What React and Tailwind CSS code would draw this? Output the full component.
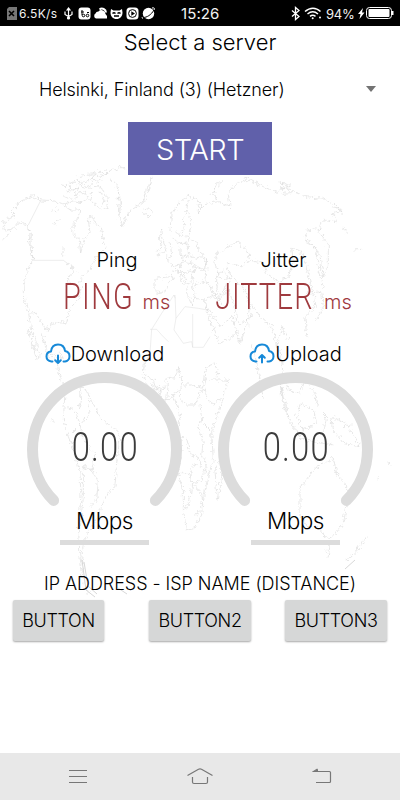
/* ── World map backdrop ──────────────────────────────────────────────── */
const WorldMap = () => (
  <svg className="absolute inset-0 pointer-events-none" width="400" height="800" fill="none" stroke="#d8d8d8" strokeWidth="1.8">
    <defs>
      <filter id="coast" x="-5%" y="-5%" width="110%" height="110%">
        <feTurbulence type="fractalNoise" baseFrequency="0.09" numOctaves="3" seed="4" />
        <feDisplacementMap in="SourceGraphic" scale="20" xChannelSelector="R" yChannelSelector="G" />
      </filter>
    </defs>
    {/* North America and Greenland */}
    <g transform="translate(0 160) scale(.3333)" filter="url(#coast)">
      <path d="M5 242 22 225 40 205 15 213 8 190 25 178 45 168 32 155 60 125 95 108 123 120 160 122 190 132 220 125 245 130" />
      <path d="M40 205 60 185 80 195 90 215 88 250 95 280 100 300M84 200 94 225 93 260 98 290 94 310M100 300 85 330 72 370 74 420 85 455 95 510 110 550 120 590" />
      <path d="M85 460 105 458 125 485 140 515 150 492 185 485 200 490 208 450 235 415 245 380" />
      <path d="M190 132 215 150 240 150 235 175 220 190 218 220 238 240 242 280 250 250 255 235 270 215 265 180 275 165" />
      <path d="M275 165 285 190 300 200 310 235 318 265 295 285 280 300 270 330 245 350 235 380" />
      <path d="M200 310 215 315 225 335 205 350 208 375M210 325 225 320M150 155 175 145 165 160M160 190 182 178M190 255 188 290" />
      <path d="M205 70 230 60 250 70 290 45 310 50 330 30 365 22 380 28M200 95 240 85 220 105 255 95 265 115 240 130M265 85 300 80 320 105 325 145 300 150 285 130 270 120 275 95M180 75 215 78 205 90M230 50 270 45 300 35M235 75 260 82 280 65 305 60M190 110 215 118 235 110M275 60 290 35 325 40M210 80 225 90 245 75 230 70M300 95 312 120 305 140" />
      <path d="M330 60 350 70 358 110 355 160 365 200 380 170 395 150 430 125 445 90 452 60 458 48M356 95 362 130 358 165M430 150 445 145 460 155 445 170 430 160M430 120 440 85 450 70" />
    </g>
    <g transform="translate(0 160) scale(.3333)" strokeWidth="1.5">
      <path d="M123 120 85 195M102 301H190L205 312" />
    </g>
    {/* Central and South America */}
    <g transform="translate(0 330) scale(.3333)" filter="url(#coast)">
      <path d="M85 0 95 40 112 90M125 10 145 75 170 95 180 140 195 185 205 175 240 170 260 180 275 215 305 270 345 295 360 320 350 400 345 470 320 495 305 530 290 570 265 605 250 640 245 690" />
      <path d="M195 185 190 270 205 320 225 370 240 430 243 500 235 590 240 680 250 750 265 790" />
      <path d="M205 230 230 250 240 285 215 310M240 170 245 210 235 240M265 205 270 250 240 285 250 330 285 370 275 420 250 410M275 420 295 450 290 510 270 530M250 410 250 500 240 600" />
      <path d="M150 70 190 85 175 60M155 265 160 275" />
    </g>
    {/* Europe and the Middle East */}
    <g transform="translate(120 170) scale(.3333)" filter="url(#coast)">
      <path d="M150 180 155 135 180 95 205 78 230 88 250 110 230 105M170 185 180 200 192 180 190 150 200 120 205 90M190 195 205 200 215 160 205 120M235 120 240 130 228 120M105 245 125 235 118 205 125 180 130 210 138 245 110 255" />
      <path d="M155 205 175 215 200 225 205 205 230 215 235 245 255 260 260 285 245 300 230 290 215 310 225 335 215 345 225 370 215 405 205 380 200 350 185 330 180 305 160 300 155 320 105 325 105 365 130 370 160 320" />
      <path d="M150 215 155 255 140 260 155 290 185 285 185 265 210 255 230 265 245 260M180 230 180 260 205 250 205 225M175 285 195 275 220 280 225 305 205 300 195 315 180 300M190 315 200 340 215 335M225 345 250 335 275 350 280 375 255 390 225 385" />
      <path d="M255 390 265 440 285 490 300 520 340 500 355 480M280 375 300 385 325 360 345 410 350 455 375 460 395 430M290 315 310 300 330 330 315 350 300 390 290 350Z" />
    </g>
    <g transform="translate(120 170) scale(.3333)" strokeWidth="1.3">
      <path d="M95 478 125 430 162 375 166 385M165 375 168 445 195 410 235 415 262 420M218 432V532H250L270 500M168 445 162 480 190 520 215 515 218 532M90 478H110L125 495 145 515M95 478 90 550 75 580" />
    </g>
    {/* Africa */}
    <g transform="translate(120 360) scale(.3333)" filter="url(#coast)">
      <path d="M75 -20 70 45 85 80 105 118 140 120 160 105 175 150 180 180 170 210 185 250 180 290 175 340 190 400 190 450 200 510 225 500 245 465 250 420 265 345 280 300 275 215 290 170 305 130 325 60 270 60" />
      <path d="M75 45 100 60 110 90 135 85 140 50 165 55 175 20 185 65 180 120 200 135 225 135 240 100 250 85 215 75 190 75M250 85 260 20 285 10 295 50M255 85 262 120 280 130 305 115M240 130 245 180 235 210 250 235 245 290 260 310 255 340" />
      <path d="M180 230 200 235 210 280 235 295 245 320 225 310 210 340 180 340M210 340 215 370 245 360 250 335M215 370 210 420 195 450M215 370 245 400 250 435M240 425 243 445M225 460 235 455 230 470ZM250 190 270 210M285 330 290 400 295 420 305 350 300 300Z" />
      <path d="M95 70 110 110M115 75 125 115M145 70 140 120M160 100 185 90" />
    </g>
    {/* Asia */}
    <g transform="translate(200 160) scale(.3333)" filter="url(#coast)">
      <path d="M0 150 20 130 60 125 90 140 85 100 110 70 150 60 190 80 235 100 250 80 280 95 320 110 370 115 400 130 425 155 400 160 410 185 380 180 365 185 355 215 385 250 385 320 370 350 360 290 345 260 315 235 320 210 365 205" />
      <path d="M35 105 50 70 65 65M65 65 40 90 50 120M130 55 150 48M240 70 270 72M235 65 265 80 245 85M245 100 275 98M460 270 485 268M430 200 440 225M320 245 345 260 355 320 370 380 355 400M395 140 420 145 430 165" />
      <path d="M45 310 50 280 110 245 140 270 150 300 190 310 200 340 235 365 265 350 280 300 275 265 310 280 320 330 335 380 345 440 315 470 320 530" />
      <path d="M45 310 60 360 95 355 130 380 150 430 140 500 120 550 95 470 60 500 20 440M95 355 80 310 120 320 150 300M150 430 190 480 215 500 230 560 245 500 265 540" />
      <path d="M320 400 365 395 370 440 350 480M0 290 20 300 15 360 40 400 70 440" />
    </g>
    {/* Indonesia and Australia */}
    <g transform="translate(200 330) scale(.3333)" filter="url(#coast)">
      <path d="M155 40 170 100 190 205 180 180M240 160 270 280 300 320 255 240ZM300 220 340 240 350 280 310 300 290 260ZM300 325 340 335 400 345M360 240 380 260 370 310M395 260 440 280 480 350 430 340 400 300ZM240 60 250 130 265 180 300 190 320 140M325 170 345 190 355 230M430 290 455 285" />
      <path d="M300 475 340 420 370 400 400 385 410 430 440 470 440 530 430 580 400 620 385 630 350 590 320 590 300 560ZM370 635 390 645 385 680 375 660M500 620 480 650 450 685 440 690M560 395 575 405M535 445 540 440" />
    </g>
    <path d="M82 560 84 575 86 590 95 597M84 562 88 586 97 594M118 588 127 594M345 569 355 560" strokeWidth="1" />
  </svg>
);

/* ── Status bar ──────────────────────────────────────────────────────── */
const StatusBar = () => (
  <div className="relative flex h-[26px] items-center bg-black font-normal text-[#f2f2f2]">
    <svg width="160" height="26" className="absolute left-0 top-0" fill="none">
      <path d="M9 7h8v13H7V9z" fill="#777" />
      <path d="m9 11 5 5m0-5-5 5" stroke="#000" strokeWidth="1.6" />
      <g stroke="#fff" strokeWidth="1.2">
        <path d="M68.500 9v9M65 11.500v3l3.500 2 3.500-2v-3" />
        <circle cx="68.500" cy="18" r="1" fill="#fff" />
        <path d="m67 10 1.500-2 1.500 2z" fill="#fff" />
      </g>
      <rect x="78.500" y="7.500" width="12" height="12" rx="3" fill="#fff" />
      <path d="M82 10v5m-1-3h3" stroke="#000" />
      <circle cx="83.500" cy="15.500" r="1.300" stroke="#000" />
      <circle cx="87.500" cy="15.500" r="1.300" stroke="#000" />
      <path d="M87 12.500h2" stroke="#000" />
      <path d="M96 18.500a2.800 2.800 0 0 1-.5-5 3 3 0 0 1 3-2 4 4 0 0 1 7 2.500l1.500 2v2.500z" fill="#fff" />
      <path d="M99.500 9.500a4 4 0 0 1 6.500 3" stroke="#fff" strokeWidth="2" />
      <path d="M111 9 113.500 10.500h6L122 9l.5 3.500c0 4-2.500 6.500-6 6.500s-6-2.500-6-6.500z" fill="#fff" />
      <path d="M112.500 13.500c1-1 2-1 3 0m2 0c1-1 2-1 3 0M114 16h5" stroke="#000" strokeWidth="1.300" />
      <rect x="126.500" y="7.500" width="12" height="12" rx="3.500" fill="#fff" />
      <circle cx="132.500" cy="13.500" r="3.900" stroke="#000" />
      <path d="m131.300 11.300 3.700 2.200-3.700 2.200z" fill="#000" />
      <circle cx="148.500" cy="13.500" r="5.700" fill="#fff" />
      <path d="M143 17.500c4 0 8-2.500 11-7.500" stroke="#000" />
      <path d="M143 18.500c-1-.3-1-.8-.5-1.500M152 8c2-.5 3 0 2 2" stroke="#fff" />
    </svg>
    <span className="absolute left-[19px] top-[5px] text-[12px] leading-[18px] tracking-[0.35px]">6.5K/s</span>
    <span className="absolute left-[181px] top-[5px] text-[15px] leading-[18px] tracking-[0.1px]">15:26</span>
    <svg width="110" height="26" className="absolute left-[290px] top-0" fill="none" stroke="#fff">
      <path d="m2 10.500 7 6-3.500 3V7.500l3.500 3-7 6" strokeWidth="1.300" />
      <path d="M15 11.500c5-4.500 11-4.500 15.500 0M17.500 14c3.500-3 7-3 10.500 0M20 16.300c2-1.500 3.500-1.500 5.500 0" strokeWidth="1.500" />
      <circle cx="22.700" cy="18.200" r="1" fill="#fff" stroke="none" />
      <circle cx="30" cy="17.500" r="1" fill="#fff" stroke="none" />
      <path d="m73 8-5 6h2.500l-1 5 5-6.500H72z" fill="#fff" stroke="none" />
      <rect x="76.500" y="7.500" width="25" height="11" rx="3" />
      <rect x="78.500" y="9" width="21" height="8" rx="1" fill="#fff" stroke="none" />
      <path d="M102.500 11v4" strokeWidth="2" />
    </svg>
    <span className="absolute left-[326px] top-[5px] text-[13px] leading-[18px] tracking-[-0.2px]">94%</span>
  </div>
);

/* ── Latency reading ─────────────────────────────────────────────────── */
const Latency = ({ label, value, valueClass, className }) => (
  <div className={`flex flex-col items-center ${className}`}>
    <p className="text-[20px] leading-6">{label}</p>
    <div className="mt-[7px] flex h-9 items-baseline gap-[10px] whitespace-nowrap text-[#9f3a3e]">
      <span className={`flex justify-center font-['Roboto'] text-[36px] leading-9 ${valueClass}`}>
        <span className="scale-x-[0.8]">{value}</span>
      </span>
      <span className="text-[20px]">ms</span>
    </div>
  </div>
);

const CloudIcon = ({ up }) => (
  <svg width="26" height="22" viewBox="0 0 26 22" fill="none" stroke="#1689d8" strokeWidth="2" strokeLinecap="round" strokeLinejoin="round">
    <path d="M7.500 18.500h-1C3.500 18 1.500 16 1.500 13.500c0-3 2-4.800 4.500-5C6.500 4 9 1.500 13 1.500s6.500 2.500 7 6.500c2.800.5 4.500 2.500 4.500 5.200 0 2.800-2 5-4.500 5.300h-1.500" />
    {up ? <path d="M13 19.500v-7m-2.800 2.300L13 12l2.800 2.800" /> : <path d="M13 12.500v7m-2.800-2.300L13 20l2.800-2.800" />}
  </svg>
);

/* ── Speed gauge ─────────────────────────────────────────────────────── */
const Gauge = ({ label, up }) => (
  <div className="flex w-[155px] flex-col items-center">
    <div className="flex h-[26px] items-center text-[20px]">
      <CloudIcon up={up} />
      <span>{label}</span>
    </div>
    <div className="relative mt-[5px] h-[173px] w-[155px]">
      <svg width="155" height="155" fill="none" stroke="#dcdcdc" strokeWidth="11" strokeLinecap="round">
        <path d="M26.600 128.400a72 72 0 1 1 101.800 0" />
      </svg>
      <p className="absolute inset-x-0 top-[51px] scale-x-[0.8] pl-[2px] text-center font-['Roboto'] text-[41px] leading-[48px] tracking-[1.500px] text-[#3c3c3c]">0.00</p>
      <p className="absolute inset-x-0 bottom-[10px] text-center text-[22.500px] leading-7 tracking-[-0.5px]">Mbps</p>
    </div>
    <div className="-mt-[5px] h-[5px] w-[89px] bg-[#dcdcdc]" />
  </div>
);

const ActionButton = ({ children, className }) => (
  <button className={`h-[41px] rounded-[2px] bg-[#d6d7d7] text-[18px] tracking-[-0.35px] shadow-[0_1px_2px_rgba(0,0,0,0.35)] ${className}`}>
    {children}
  </button>
);

const NavBar = () => (
  <div className="flex h-[47px] items-center justify-between bg-[#e8e8e8] px-[68px]">
    <svg width="20" height="20" fill="none" stroke="#777" strokeWidth="1.200"><path d="M1 3.500h18M1 9.500h18M1 15.500h18" /></svg>
    <svg width="28" height="20" fill="none" stroke="#777" strokeWidth="1.200"><path d="m1.500 8.500 11-6.300q1.500-.8 3 0l11 6.300M6.500 10v5q0 1.500 1.500 1.500h12q1.500 0 1.500-1.500v-5" /></svg>
    <svg width="20" height="20" fill="none" stroke="#777" strokeWidth="1.200"><path d="m5.500 2-4 2.500h16q1 0 1 1v9q0 1-1 1H4" /><path d="m6 2-4 2.500h4z" fill="#777" stroke="none" /></svg>
  </div>
);

export default function App() {
  return (
    <div className="relative flex h-[800px] w-[400px] flex-col overflow-hidden bg-white font-['Inter'] font-light text-black">
      <WorldMap />
      <StatusBar />
      <main className="relative flex flex-1 flex-col">
        <h1 className="mt-[2px] text-center text-[22px] leading-7">Select a server</h1>
        <div className="mt-[19px] flex h-7 items-center justify-between pl-[39px] pr-[24px] text-[18px]">
          <span className="tracking-[-0.12px]">Helsinki, Finland (3) (Hetzner)</span>
          <span className="border-x-[5.500px] border-t-[6px] border-x-transparent border-t-[#737373]" />
        </div>
        <button className="mx-auto mt-[18.500px] h-[53.500px] w-36 bg-[#6060aa] pt-[3px] text-[29px] tracking-[-0.5px] text-white">START</button>
        <div className="mt-[73px] flex pl-[63px]">
          <Latency label="Ping" value="PING" valueClass="w-[69px] tracking-[1.800px]" className="w-[108px]" />
          <Latency label="Jitter" value="JITTER" valueClass="w-[99px] tracking-[1.200px]" className="ml-[44px] w-[137px]" />
        </div>
        <div className="mt-[26px] flex justify-between px-[27px]">
          <Gauge label="Download" />
          <Gauge label="Upload" up />
        </div>
        <p className="mt-[27px] text-center text-[18px] leading-6 tracking-[-0.05px]">IP ADDRESS - ISP NAME (DISTANCE)</p>
        <div className="mt-1 flex px-[13px]">
          <ActionButton className="w-[91px]">BUTTON</ActionButton>
          <ActionButton className="ml-[45px] w-[102px]">BUTTON2</ActionButton>
          <ActionButton className="ml-auto w-[102px]">BUTTON3</ActionButton>
        </div>
      </main>
      <NavBar />
    </div>
  );
}
